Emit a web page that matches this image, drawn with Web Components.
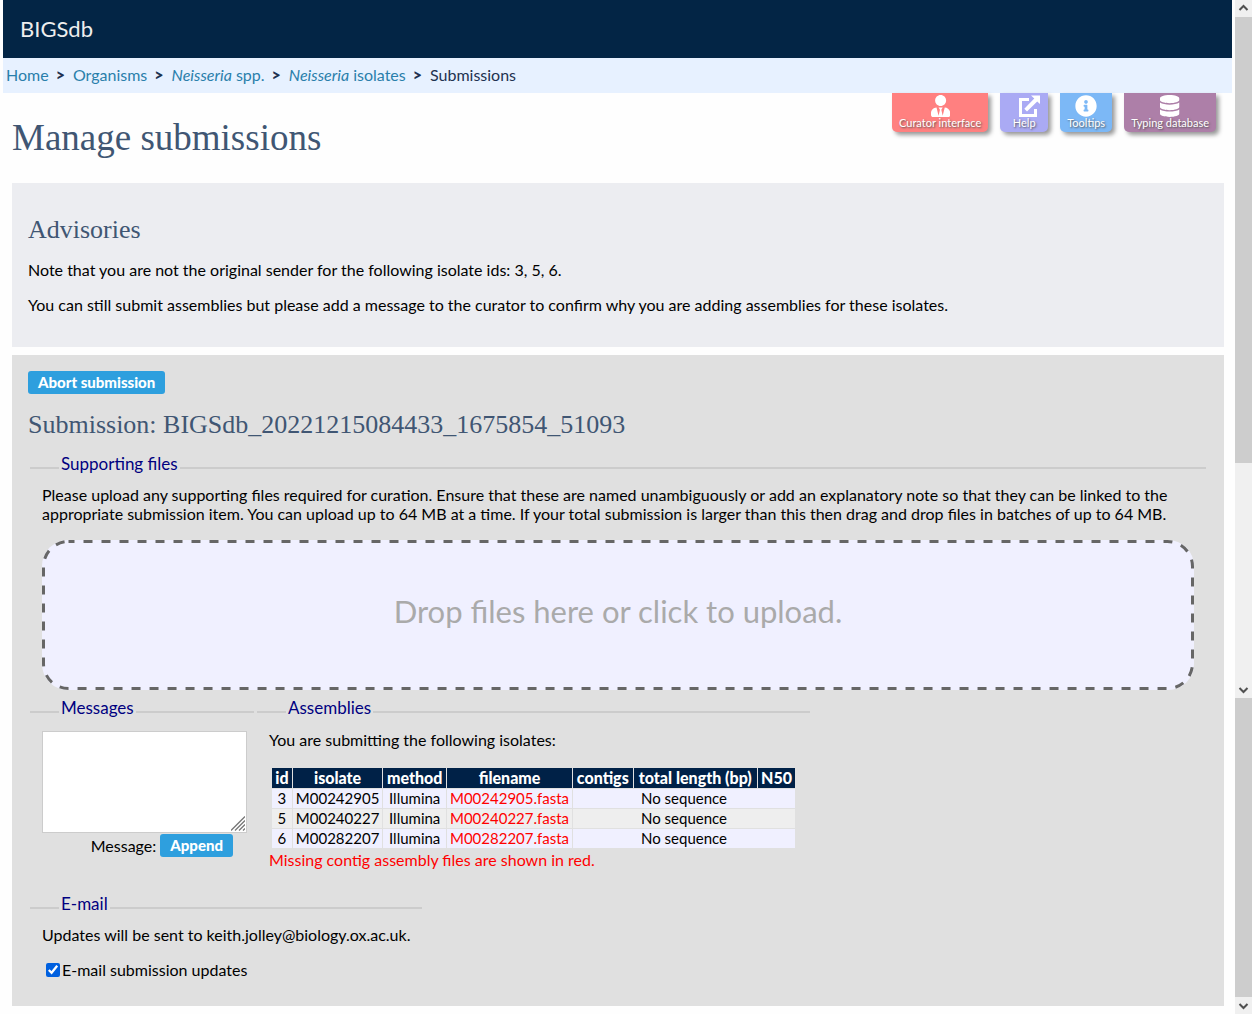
<!DOCTYPE html>
<html lang="en">
<head>
<meta charset="utf-8">
<title>Manage submissions - BIGSdb</title>
<style>
html, body { margin: 0; }
body { background: #fefefe; color: #000; font: 16px/19px Lato, "Open Sans", sans-serif; }
</style>
</head>
<body>
<submissions-page></submissions-page>
<script>
const define = (name, html, setup) => {
  const template = document.createElement('template');
  template.innerHTML = html;
  customElements.define(name, class extends HTMLElement {
    constructor() {
      super();
      this.attachShadow({ mode: 'open' }).append(template.content.cloneNode(true));
    }
    connectedCallback() { if (setup) setup(this, this.shadowRoot); }
  });
};

define('site-header', `
<style>
:host { display: block; background: #032545; color: #eee; padding: 13px 17px; font-size: 22px; line-height: 32px; }
</style>
<slot></slot>`);

define('bread-crumbs', `
<style>
:host { display: block; background: #e7f1ff; padding: 7px 3px 9px; color: #1e3250; }
ol { display: flex; flex-wrap: wrap; list-style: none; margin: 0; padding: 0; }
li + li::before { content: ">"; font-weight: 900; margin: 0 8px 0 7px; }
a { color: #2a7fab; text-decoration: none; }
</style>
<nav aria-label="Breadcrumb"><ol>
<li><a href="#">Home</a></li>
<li><a href="#">Organisms</a></li>
<li><a href="#"><i>Neisseria</i> spp.</a></li>
<li><a href="#"><i>Neisseria</i> isolates</a></li>
<li>Submissions</li>
</ol></nav>`);

define('tab-link', `
<style>
:host { display: block; }
a { display: flex; flex-direction: column; align-items: center; box-sizing: border-box; height: 39px; min-width: 48px; padding: 2px 7px 0;
  border-radius: 0 0 5px 5px; background: var(--tab); color: #fff; text-decoration: none; font-size: 11px; line-height: 12px;
  text-shadow: 1px 1px 2px #555; box-shadow: 3px 3px 4px #999; }
svg { height: 22px; fill: #fff; }
</style>
<a href="#"><svg aria-hidden="true"><path/></svg><slot></slot></a>`, (el, root) => {
  const icons = {
    curator: ['0 0 448 512', 'M224 256c70.7 0 128-57.3 128-128S294.7 0 224 0 96 57.3 96 128s57.3 128 128 128zm95.8 32.6L272 480l-32-136 32-56h-96l32 56-32 136-47.8-191.4C56.9 292 0 350.3 0 422.4V464c0 26.5 21.5 48 48 48h352c26.5 0 48-21.5 48-48v-41.6c0-72.1-56.9-130.4-128.2-133.8z'],
    external: ['-10 0 32 22', 'M13 0.500H22V9L19.200 6.500L9 16.500L6.300 13.800L16.300 3.500ZM1 3H11V6H4V19H16V14H19V22H1Z'],
    info: ['0 0 512 512', 'M256 8C119 8 8 119 8 256s111 248 248 248 248-111 248-248S393 8 256 8zm0 110c23.200 0 42 18.800 42 42s-18.800 42-42 42-42-18.800-42-42 18.800-42 42-42zm56 254c0 6.600-5.400 12-12 12h-88c-6.600 0-12-5.400-12-12v-24c0-6.600 5.400-12 12-12h12v-64h-12c-6.600 0-12-5.400-12-12v-24c0-6.600 5.400-12 12-12h64c6.600 0 12 5.400 12 12v100h12c6.600 0 12 5.400 12 12v24z'],
    database: ['0 0 448 512', 'M448 73.143v45.714C448 159.143 347.667 192 224 192S0 159.143 0 118.857V73.143C0 32.857 100.333 0 224 0s224 32.857 224 73.143zM448 176v102.857C448 319.143 347.667 352 224 352S0 319.143 0 278.857V176c48.125 33.143 136.208 48.572 224 48.572S399.874 209.143 448 176zm0 160v102.857C448 479.143 347.667 512 224 512S0 479.143 0 438.857V336c48.125 33.143 136.208 48.572 224 48.572S399.874 369.143 448 336z']
  };
  const [box, d] = icons[el.getAttribute('icon')];
  root.querySelector('svg').setAttribute('viewBox', box);
  root.querySelector('path').setAttribute('d', d);
});

define('page-tabs', `
<style>
:host { display: flex; gap: 12px; }
</style>
<tab-link icon="curator" style="--tab:#ff8080">Curator interface</tab-link>
<tab-link icon="external" style="--tab:#aaaaf4">Help</tab-link>
<tab-link icon="info" style="--tab:#7cb8f6">Tooltips</tab-link>
<tab-link icon="database" style="--tab:#ad7fa8">Typing database</tab-link>`);

define('content-box', `
<style>
:host { display: block; padding: 16px; background: var(--box, #e0e0e0); }
</style>
<slot></slot>`);

define('section-heading', `
<style>
:host { display: block; }
h2 { margin: 0; font: 26px/30px "Liberation Serif", serif; color: #405673; }
</style>
<h2><slot></slot></h2>`);

define('action-button', `
<style>
:host { display: inline-block; }
button { display: block; border: 0; border-radius: 3px; margin: 0; padding: 2px 10px; background: #2e9fde; color: #fff;
  font: 900 15px/19px Lato, "Open Sans", sans-serif; }
</style>
<button type="button"><slot></slot></button>`);

define('field-group', `
<style>
:host { display: block; }
fieldset { border: 0; border-top: 2px solid #ccc; margin: 0; padding: 0 var(--end, 12px) 0 12px; min-width: 0; }
legend { margin-left: 17px; padding: 0 2px 2px; color: #000080; font-size: 17px; line-height: 20px; position: relative; top: -3px; }
</style>
<fieldset><legend><slot name="legend"></slot></legend><slot></slot></fieldset>`);

define('drop-zone', `
<style>
:host { display: block; position: relative; }
button { display: block; width: 100%; height: 150px; box-sizing: border-box; margin: 0; border: 0; border-radius: 26px;
  background: #f0f0ff; color: #aaa; font: 31px/38px Lato, "Open Sans", sans-serif; padding: 0 0 8px; }
svg { position: absolute; inset: 0; width: 100%; height: 100%; pointer-events: none; }
rect { width: calc(100% - 3px); height: calc(100% - 3px); fill: none; stroke: #666; stroke-width: 3; stroke-dasharray: 9 9; stroke-dashoffset: 3; }
</style>
<button type="button"><slot></slot></button>
<svg aria-hidden="true"><rect x="1.500" y="1.500" rx="25"/></svg>`);

define('message-form', `
<style>
:host { display: block; }
.box { position: relative; width: 205px; }
textarea { display: block; box-sizing: border-box; width: 100%; height: 102px; margin: 0; border: 1px solid #ccc; background: #fff; resize: none; }
.grip { position: absolute; right: 2px; bottom: 2px; stroke: #777; stroke-width: 1.300; }
.send { display: flex; justify-content: flex-end; align-items: center; gap: 4px; padding: 1px 14px 0 0; }
</style>
<div class="box"><textarea id="message"></textarea>
<svg class="grip" width="14" height="15" viewBox="0 0 14 15" aria-hidden="true"><path d="M0 14.500L14 0.500M4 14.500L14 4.500M8 14.500L14 8.500M12 14.500L14 12.500"/></svg></div>
<div class="send"><label for="message">Message:</label><action-button>Append</action-button></div>`);

define('assembly-table', `
<style>
:host { display: block; }
table { border-spacing: 1px; margin: 0 2px; }
th, td { box-sizing: border-box; padding: 0 3px 1px; text-align: center; white-space: nowrap; }
th { background: #002147; color: #fff; font-size: 16px; font-weight: 900; line-height: 19px; }
td { font-size: 15px; line-height: 18px; }
tbody tr:nth-child(odd) td { background: #f0f0ff; }
tbody tr:nth-child(even) td { background: #eee; }
.missing { color: #f00; }
</style>
<table>
<colgroup><col style="width:20px"><col style="width:89px"><col style="width:63px"><col style="width:125px"><col style="width:60px"><col style="width:125px"><col style="width:36px"></colgroup>
<thead><tr><th>id</th><th>isolate</th><th>method</th><th>filename</th><th>contigs</th><th>total length (bp)</th><th>N50</th></tr></thead>
<tbody></tbody>
</table>`, (el, root) => {
  const rows = [[3, 'M00242905'], [5, 'M00240227'], [6, 'M00282207']];
  root.querySelector('tbody').innerHTML = rows.map(([id, name]) =>
    `<tr><td>${id}</td><td>${name}</td><td>Illumina</td><td class="missing">${name}.fasta</td><td colspan="3">No sequence</td></tr>`).join('');
});

define('email-option', `
<style>
:host { display: block; }
label { display: flex; align-items: center; gap: 2px; }
input { width: 14px; height: 14px; margin: 0 0 0 4px; accent-color: #0060df; }
</style>
<label><input type="checkbox" checked>E-mail submission updates</label>`);

define('scroll-arrow', `
<style>
:host { display: block; height: 17px; background: #f0f0f0; }
:host([up]) svg { transform: scaleY(-1); }
svg { display: block; fill: none; stroke: #505050; stroke-width: 2; }
</style>
<svg width="17" height="17" viewBox="0 0 17 17" aria-hidden="true"><path d="M4.500 7L8.500 11L12.500 7"/></svg>`);

define('scroll-rail', `
<style>
:host { display: flex; flex-direction: column; width: 17px; background: #f0f0f0; }
.thumb { background: #cdcdcd; }
.upper { flex: 446; }
.track { flex: 218; }
.lower { flex: 299; }
</style>
<scroll-arrow up></scroll-arrow>
<div class="thumb upper"></div>
<div class="track"></div>
<scroll-arrow></scroll-arrow>
<div class="thumb lower"></div>
<scroll-arrow></scroll-arrow>`);

define('submissions-page', `
<style>
:host { display: flex; gap: 3px; min-height: 100vh; }
.page { flex: 1; min-width: 0; padding-left: 3px; }
.top { display: flex; justify-content: space-between; align-items: flex-start; padding: 0 16px 0 9px; }
h1 { margin: 0; padding: 24px 0; font: 37px/42px "Liberation Serif", serif; color: #405673; }
main { display: flex; flex-direction: column; gap: 8px; padding: 0 8px 8px 9px; }
p { margin: 0; }
.advisories { --box: #ecedf1; padding: 32px 16px 33px; }
.advisories section-heading { margin-bottom: 15px; }
.advisories p + p { margin-top: 16px; }
.submission { padding-bottom: 27px; }
.submission section-heading { margin: 16px 0 17px; }
.groups { display: flex; flex-direction: column; gap: 11px; padding: 0 2px; }
.row { display: flex; align-items: flex-start; gap: 3px; }
.files p { margin: 6px 0 17px; }
.messages { --end: 7px; }
.messages message-form { margin-top: 8px; }
.assemblies { flex: 0 1 553px; }
.assemblies p { margin: 7px 0 18px; }
.assemblies .note { color: #f00; margin: 1px 0 17px; }
.mail { align-self: flex-start; }
.mail p { margin: 6px 0 16px; }
</style>
<div class="page">
<site-header>BIGSdb</site-header>
<bread-crumbs></bread-crumbs>
<div class="top"><h1>Manage submissions</h1><page-tabs></page-tabs></div>
<main>
<content-box class="advisories">
<section-heading>Advisories</section-heading>
<p>Note that you are not the original sender for the following isolate ids: 3, 5, 6.</p>
<p>You can still submit assemblies but please add a message to the curator to confirm why you are adding assemblies for these isolates.</p>
</content-box>
<content-box class="submission">
<action-button>Abort submission</action-button>
<section-heading>Submission: BIGSdb_20221215084433_1675854_51093</section-heading>
<div class="groups">
<field-group class="files"><span slot="legend">Supporting files</span>
<p>Please upload any supporting files required for curation. Ensure that these are named unambiguously or add an explanatory note so that they can be linked to the appropriate submission item. You can upload up to 64 MB at a time. If your total submission is larger than this then drag and drop files in batches of up to 64 MB.</p>
<drop-zone>Drop files here or click to upload.</drop-zone>
</field-group>
<div class="row">
<field-group class="messages"><span slot="legend">Messages</span><message-form></message-form></field-group>
<field-group class="assemblies"><span slot="legend">Assemblies</span>
<p>You are submitting the following isolates:</p>
<assembly-table></assembly-table>
<p class="note">Missing contig assembly files are shown in red.</p>
</field-group>
</div>
<field-group class="mail"><span slot="legend">E-mail</span>
<p>Updates will be sent to keith.jolley@biology.ox.ac.uk.</p>
<email-option></email-option>
</field-group>
</div>
</content-box>
</main>
</div>
<scroll-rail></scroll-rail>`);
</script>
</body>
</html>
